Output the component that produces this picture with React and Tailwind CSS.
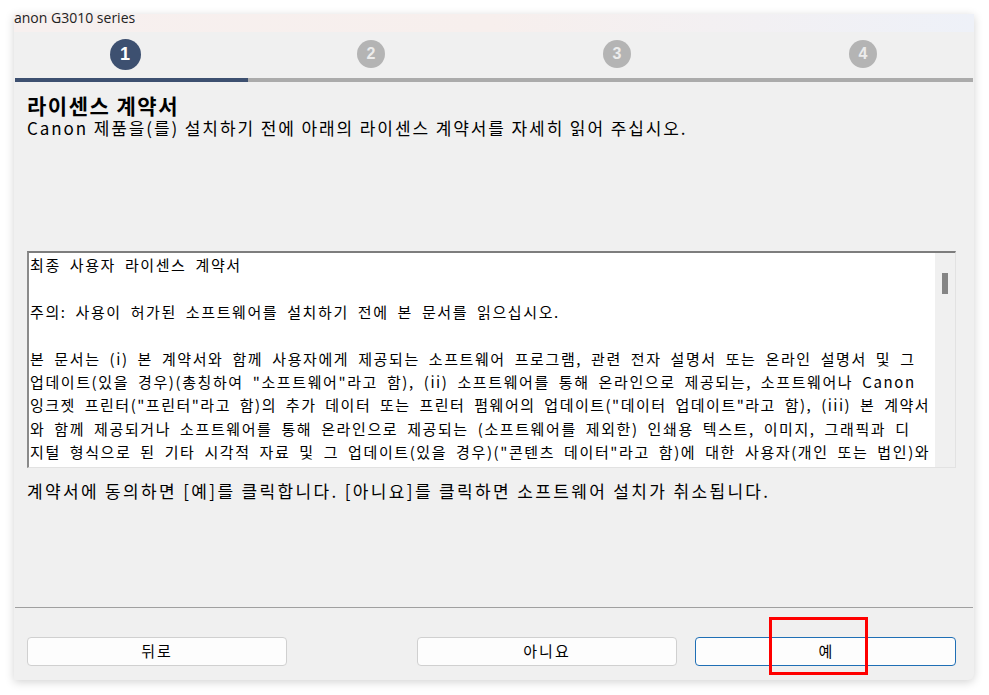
import React from "react";

const KR = { fontFamily: '"Noto Sans CJK KR", "Noto Sans", sans-serif' };

const lines = [
  { t: "최종 사용자 라이센스 계약서" },
  { t: "" },
  { t: "주의: 사용이 허가된 소프트웨어를 설치하기 전에 본 문서를 읽으십시오." },
  { t: "" },
  { t: "본 문서는 (i) 본 계약서와 함께 사용자에게 제공되는 소프트웨어 프로그램, 관련 전자 설명서 또는 온라인 설명서 및 그" },
  { t: '업데이트(있을 경우)(총칭하여 "소프트웨어"라고 함), (ii) 소프트웨어를 통해 온라인으로 제공되는, 소프트웨어나 Canon' },
  { t: '잉크젯 프린터("프린터"라고 함)의 추가 데이터 또는 프린터 펌웨어의 업데이트("데이터 업데이트"라고 함), (iii) 본 계약서', tight: true },
  { t: "와 함께 제공되거나 소프트웨어를 통해 온라인으로 제공되는 (소프트웨어를 제외한) 인쇄용 텍스트, 이미지, 그래픽과 디" },
  { t: '지털 형식으로 된 기타 시각적 자료 및 그 업데이트(있을 경우)("콘텐츠 데이터"라고 함)에 대한 사용자(개인 또는 법인)와' },
  { t: 'Canon Inc.("Canon"이라고 함) 간의 합의 사항으로, 사용자는 소프트웨어를 설치하기 전에 본 계약서를 읽어야 합니다.' },
];

function Step({ n, active }) {
  return (
    <div className="w-[246px] shrink-0 flex justify-center">
      <div
        className={
          active
            ? "w-[31px] h-[31px] rounded-full bg-[#3d5070] text-white flex items-center justify-center text-[18px] font-bold"
            : "w-[28px] h-[28px] mt-[1px] rounded-full bg-[#b4b4b4] text-[#ececec] flex items-center justify-center text-[16px] font-bold"
        }
        style={{ fontFamily: '"Liberation Sans", Arial, sans-serif' }}
      >
        {n}
      </div>
    </div>
  );
}

export default function App() {
  return (
    <div className="w-[989px] h-[695px] bg-white pt-[14px] pl-[14px] overflow-hidden">
      <div className="w-[960px] h-[666px] bg-[#f0f0f0] flex flex-col shadow-[0_2px_10px_rgba(0,0,0,0.18)] rounded-br-[6px]">
        {/* title bar */}
        <div className="h-[18px] bg-gradient-to-r from-[#f7f0ef] via-[#f7efed] to-[#eef1f8]">
          <div
            className="-mt-[5px] text-[14px] leading-[18px] text-[#222]"
            style={{ fontFamily: '"Open Sans", "Noto Sans", sans-serif' }}
          >
            anon G3010 series
          </div>
        </div>

        {/* steps */}
        <div className="h-[46px] overflow-hidden">
          <div className="flex -ml-[12px] pt-[7px]">
            <Step n="1" active />
            <Step n="2" />
            <Step n="3" />
            <Step n="4" />
          </div>
        </div>
        <div className="h-[4px] mx-[1px] flex">
          <div className="w-[233px] bg-[#3d5070]" />
          <div className="flex-1 bg-[#ababab]" />
        </div>

        {/* content */}
        <div className="pl-[13px] pr-[18px]" style={KR}>
          <div className="mt-[11px] text-[21px] leading-[24px] font-bold tracking-[1.5px] text-black">
            라이센스 계약서
          </div>
          <div className="mt-[1px] text-[17px] leading-[20px] tracking-[1.9px] text-black">
            Canon 제품을(를) 설치하기 전에 아래의 라이센스 계약서를 자세히 읽어 주십시오.
          </div>

          <div className="mt-[113px] h-[217px] border-t-2 border-l-2 border-r border-b border-t-[#7d7d7d] border-l-[#8a8a8a] border-r-[#e2e2e2] border-b-[#e2e2e2] bg-white flex">
            <div className="flex-1 overflow-hidden pl-[1px]">
              {lines.map((l, i) => (
                <div
                  key={i}
                  className={
                    l.tight
                      ? "h-[23.4px] leading-[23.4px] text-[15px] tracking-[1.5px] whitespace-nowrap text-black"
                      : "h-[23.4px] leading-[23.4px] text-[15px] tracking-[1.6px] whitespace-nowrap text-black"
                  }
                  style={{ wordSpacing: "4px" }}
                >
                  {l.t || "\u00a0"}
                </div>
              ))}
            </div>
            <div className="w-[20px] shrink-0 bg-[#f0f0f0] pt-[20px] flex justify-center">
              <div className="w-[6px] h-[21px] bg-[#858585]" />
            </div>
          </div>

          <div className="mt-[11px] text-[17px] leading-[24px] tracking-[2.35px] text-black">
            계약서에 동의하면 [예]를 클릭합니다. [아니요]를 클릭하면 소프트웨어 설치가 취소됩니다.
          </div>
        </div>

        <div className="mt-[104px] mx-[1px] h-[1px] bg-[#a0a0a0]" />

        <div className="mt-[29px] pl-[13px] pr-[18px] flex" style={KR}>
          <button className="w-[260px] h-[29px] bg-[#fdfdfd] border border-[#d0d0d0] rounded-[4px] text-[15px] tracking-[2px] text-black">
            뒤로
          </button>
          <button className="ml-[130px] w-[260px] h-[29px] bg-[#fdfdfd] border border-[#d0d0d0] rounded-[4px] text-[15px] tracking-[2px] text-black">
            아니요
          </button>
          <div className="relative ml-[18px] w-[261px] h-[29px]">
            <button className="w-full h-full bg-[#fdfdfd] border border-[#1f6fb5] rounded-[4px] text-[15px] text-black">
              예
            </button>
            <div className="absolute left-[74px] -top-[20px] w-[99px] h-[58px] border-[3px] border-[#ff0000]" />
          </div>
        </div>
      </div>
    </div>
  );
}
